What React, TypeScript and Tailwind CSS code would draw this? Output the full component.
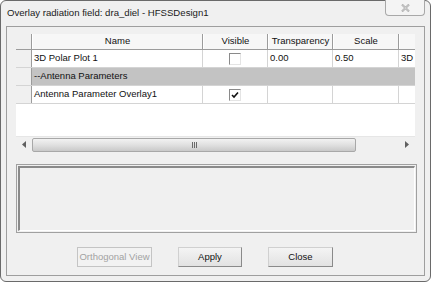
import React from "react";

const cellFont = { fontFamily: '"Liberation Sans", Arial, sans-serif' };

function CheckBox({ checked }: { checked: boolean }) {
  return (
    <div className="w-[12px] h-[12px] border-t border-l border-t-[#8a8a8a] border-l-[#8a8a8a] border-b border-r border-b-[#e4e4e4] border-r-[#e4e4e4] bg-white flex items-center justify-center">
      {checked && (
        <svg width="8" height="8" viewBox="0 0 8 8">
          <path d="M1 4 L3 6 L7 1.5" stroke="#111" strokeWidth="1.6" fill="none" />
        </svg>
      )}
    </div>
  );
}

function HeaderCell({ w, children }: { w: string; children?: React.ReactNode }) {
  return (
    <div className={`${w} h-full shrink-0 flex items-center justify-center border-r border-r-[#9c9c9c] border-l border-l-white bg-[#f7f7f7] text-[9.5px] text-[#111]`}>
      {children}
    </div>
  );
}

function Btn({ w, children, disabled }: { w: string; children: React.ReactNode; disabled?: boolean }) {
  return (
    <div
      className={`${w} h-[20px] flex items-center justify-center text-[9.5px] border ${
        disabled
          ? "border-[#c4c4c4] text-[#a2a2a2] bg-[#f2f2f2]"
          : "border-t-[#d0d0d0] border-l-[#d0d0d0] border-r-[#8a8a8a] border-b-[#8a8a8a] text-[#111] bg-gradient-to-b from-[#f4f4f4] to-[#e2e2e2]"
      }`}
      style={cellFont}
    >
      {children}
    </div>
  );
}

export default function App() {
  const rows = [
    { name: "3D Polar Plot 1", vis: "off", t: "0.00", s: "0.50", x: "3D", gray: false },
    { name: "--Antenna Parameters", vis: "none", t: "", s: "", x: "", gray: true },
    { name: "Antenna Parameter Overlay1", vis: "on", t: "", s: "", x: "", gray: false },
  ];
  return (
    <div className="w-[431px] h-[282px] bg-white">
      <div className="relative w-[431px] h-[282px] border border-[#6a6a6a] rounded-[6px] bg-[#f0f0f0] flex flex-col px-[5px] pb-[5px]" style={cellFont}>
        <div className="h-[25px] flex items-center pl-[1px] text-[9.6px] text-[#1a1a1a] shrink-0" style={cellFont}>
          Overlay radiation field: dra_diel - HFSSDesign1
        </div>
        <div className="absolute top-[-1px] right-[5px] w-[40px] h-[16px] border border-[#a8a8a8] border-t-0 rounded-b-[4px] bg-[#f4f4f4] flex items-center justify-center">
          <svg width="9" height="8" viewBox="0 0 9 8">
            <path d="M1 0.5 L8 7.5 M8 0.5 L1 7.5" stroke="#a4a4a4" strokeWidth="2" />
            <path d="M1 0.5 L8 7.5 M8 0.5 L1 7.5" stroke="#f4f4f4" strokeWidth="0.7" />
          </svg>
        </div>
        <div className="flex-1 border border-[#9e9e9e] bg-[#f0f0f0] flex flex-col pl-[9px] pr-[8px] pt-[7px]">
          {/* Grid */}
          <div className="w-[399px] h-[118px] flex flex-col overflow-hidden">
            <div className="flex-1 bg-white flex flex-col overflow-hidden">
              <div className="h-[16px] flex shrink-0 border-b border-[#9c9c9c]">
                <div className="w-[16px] h-full shrink-0 bg-[#f0f0f0] border-r border-[#9c9c9c]" />
                <HeaderCell w="w-[171px]">Name</HeaderCell>
                <HeaderCell w="w-[65px]">Visible</HeaderCell>
                <HeaderCell w="w-[65px]">Transparency</HeaderCell>
                <HeaderCell w="w-[66px]">Scale</HeaderCell>
                <HeaderCell w="w-[40px]"></HeaderCell>
              </div>
              {rows.map((r, i) => (
                <div key={i} className="h-[18px] flex shrink-0 border-b border-[#d4d4d4]">
                  <div className="w-[16px] h-full shrink-0 bg-[#f0f0f0] border-r border-[#9c9c9c]" />
                  <div className={`flex flex-1 h-full text-[9.5px] text-[#111] ${r.gray ? "bg-[#c3c3c3]" : "bg-white"}`}>
                    <div className={`w-[171px] shrink-0 h-full flex items-center pl-[2px] ${r.gray ? "" : "border-r border-[#d4d4d4]"}`}>{r.name}</div>
                    <div className={`w-[65px] shrink-0 h-full flex items-center justify-center ${r.gray ? "" : "border-r border-[#d4d4d4]"}`}>
                      {r.vis === "off" && <CheckBox checked={false} />}
                      {r.vis === "on" && <CheckBox checked={true} />}
                    </div>
                    <div className={`w-[65px] shrink-0 h-full flex items-center pl-[2px] ${r.gray ? "" : "border-r border-[#d4d4d4]"}`}>{r.t}</div>
                    <div className={`w-[66px] shrink-0 h-full flex items-center pl-[2px] ${r.gray ? "" : "border-r border-[#d4d4d4]"}`}>{r.s}</div>
                    <div className="flex-1 h-full flex items-center pl-[2px] overflow-hidden whitespace-nowrap">{r.x}</div>
                  </div>
                </div>
              ))}
            </div>
            {/* Horizontal scrollbar */}
            <div className="h-[16px] shrink-0 bg-[#f0f0f0] flex items-center border-t border-[#e6e6e6]">
              <div className="w-[16px] h-full flex items-center justify-center">
                <svg width="4" height="7" viewBox="0 0 4 7">
                  <path d="M4 0 L0 3.5 L4 7 Z" fill="#606060" />
                </svg>
              </div>
              <div className="w-[324px] h-[14px] border border-[#a8a8a8] rounded-[2px] bg-gradient-to-b from-[#f2f2f2] via-[#e0e0e0] to-[#c9c9c9] flex items-center justify-center">
                <div className="flex gap-[1px]">
                  <div className="w-[1px] h-[6px] bg-[#6a6a6a]" />
                  <div className="w-[1px] h-[6px] bg-[#6a6a6a]" />
                  <div className="w-[1px] h-[6px] bg-[#6a6a6a]" />
                </div>
              </div>
              <div className="flex-1" />
              <div className="w-[16px] h-full flex items-center justify-center">
                <svg width="4" height="7" viewBox="0 0 4 7">
                  <path d="M0 0 L4 3.5 L0 7 Z" fill="#606060" />
                </svg>
              </div>
            </div>
          </div>
          {/* Text box */}
          <div className="mt-[12px] w-[401px] h-[69px] border border-[#a0a0a0] p-[1px]">
            <div className="w-full h-full border-t-2 border-l-2 border-t-[#8a8a8a] border-l-[#8a8a8a] border-b border-r border-b-[#ffffff] border-r-[#ffffff] bg-[#f0f0f0]" />
          </div>
          {/* Buttons */}
          <div className="mt-[14px] flex gap-[26px] pl-[61px]">
            <Btn w="w-[75px]" disabled>Orthogonal View</Btn>
            <Btn w="w-[64px]">Apply</Btn>
            <Btn w="w-[65px]">Close</Btn>
          </div>
        </div>
      </div>
    </div>
  );
}
